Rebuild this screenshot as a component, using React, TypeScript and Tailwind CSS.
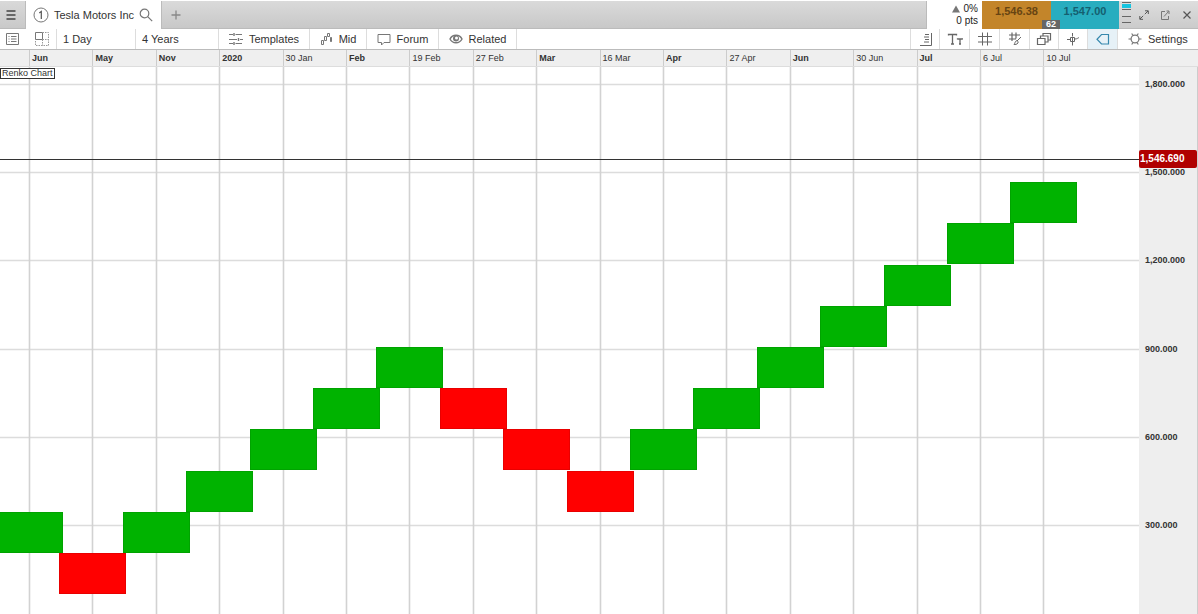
import React from "react";

const months: [string, boolean][] = [
  ["Jun", true], ["May", true], ["Nov", true], ["2020", true], ["30 Jan", false], ["Feb", true],
  ["19 Feb", false], ["27 Feb", false], ["Mar", true], ["16 Mar", false], ["Apr", true],
  ["27 Apr", false], ["Jun", true], ["30 Jun", false], ["Jul", true], ["6 Jul", false], ["10 Jul", false],
];
const prices = ["1,800.000", "1,500.000", "1,200.000", "900.000", "600.000", "300.000"];

// Renko bricks: level counted in brick heights from the lowest one
const levels = [1, 0, 1, 2, 3, 4, 5, 4, 3, 2, 3, 4, 5, 6, 7, 8, 9];
const W = 1139;
const H = 547;
const columnX = (i: number) => Math.round(29 + i * 63.4);
const gridY = (i: number) => Math.round(17 + i * 88.2);
const LAST_Y = 92;

function Icon({ children, w = 16, h = 16 }: { children: React.ReactNode; w?: number; h?: number }) {
  return (
    <svg width={w} height={h} viewBox={`0 0 ${w} ${h}`} fill="none" stroke="currentColor" strokeWidth="1" className="shrink-0" aria-hidden="true">
      {children}
    </svg>
  );
}

function TopBar() {
  return (
    <header className="flex h-7 shrink-0 text-[11px] text-[#333]">
      <button aria-label="Menu" className="flex w-[26px] items-center justify-center border-r border-b border-[#bbb] bg-linear-to-b from-[#d9d9d9] to-[#c9c9c9] pr-1 text-[#444]">
        <Icon w={12} h={12}><path d="M1.500 2h9M1.500 6h9M1.500 10h9" strokeWidth="1.7" /></Icon>
      </button>
      <button className="flex w-[135px] items-center gap-[5px] bg-white pl-[7px] whitespace-nowrap">
        <Icon><circle cx="8" cy="8" r="7" stroke="#777" /><path d="M6.3 6l2-1.600V12" stroke="#555" strokeWidth="1.200" /></Icon>
        <span>Tesla Motors Inc</span>
        <span className="text-[#777]"><Icon w={14} h={14}><circle cx="5.500" cy="5.500" r="4.300" strokeWidth="1.200" /><path d="M8.700 8.700l4.500 4.500" strokeWidth="1.200" /></Icon></span>
      </button>
      <div className="flex min-w-0 flex-1 items-center border-x border-b border-[#bbb] bg-linear-to-b from-[#dadada] to-[#c8c8c8] pl-2">
        <button aria-label="Add tab" className="text-[#888]"><Icon w={12} h={12}><path d="M6 1.500v9M1.500 6h9" strokeWidth="1.3" /></Icon></button>
      </div>
      <div className="w-[55px] pt-[2px] pr-1 text-right text-[10px] leading-3 text-[#222]">
        <div className="flex items-center justify-end gap-1">
          <Icon w={8} h={8}><path d="M4 0.500L8 7.500H0Z" fill="#777" stroke="none" /></Icon>0%
        </div>
        <div>0 pts</div>
      </div>
      <div className="relative flex w-[137px] text-[11px] leading-5 font-bold">
        <button className="flex w-[69px] items-start justify-center bg-[#c3852a] text-[#674412]">1,546.38</button>
        <button className="flex w-[68px] items-start justify-center bg-[#28adbf] text-[#155f70]">1,547.00</button>
        <span className="absolute bottom-0 left-[60px] w-[18px] bg-[#666] text-center text-[9px] leading-[9px] text-white">62</span>
      </div>
      <div className="flex w-[79px] items-center border-b border-[#bbb] bg-linear-to-b from-[#dedede] to-[#cbcbcb] text-[#555]">
        <Icon w={14} h={28}>
          <path d="M3 3h9v4h-9z" fill="#17c4e0" stroke="none" />
          <path d="M3 1.500h9M3 8.500h9M3 15.500h9M3 21.500h9" stroke="#666" />
        </Icon>
        <div className="flex flex-1 items-center justify-around">
          <button aria-label="Expand"><Icon w={10} h={10}><path d="M5.800 4.200L9 1M6 .8h3.300V4M4.200 5.800L1 9M.8 6v3.300H4" /></Icon></button>
          <button aria-label="Open in window"><Icon w={10} h={10}><path d="M5 1.500H1.500v8h7V6M4 6.500l4.500-5M6.500 1h2.500v3" stroke="#777" /></Icon></button>
          <button aria-label="Close"><Icon w={10} h={10}><path d="M1.500 1.500l7 7M8.500 1.500l-7 7" strokeWidth="1.200" /></Icon></button>
        </div>
      </div>
    </header>
  );
}

const tool = "flex items-center justify-center gap-[6px] border-r border-[#ddd] whitespace-nowrap";

function Toolbar() {
  return (
    <nav className="flex h-[21px] shrink-0 border-b border-[#bbb] bg-white text-[11px] text-[#333]">
      <button aria-label="List" className="flex w-7 items-center pl-1 text-[#777]">
        <Icon><path d="M2.500 2.500h12v11h-12zM7 5.500h5.500M7 8h5.500M7 10.500h5.500M4.500 5.500h1M4.500 8h1M4.500 10.500h1" /></Icon>
      </button>
      <button aria-label="Layout" className={`${tool} w-[29px] text-[#777]`}>
        <Icon><path d="M1.500 1.500h7v7h-7z" /><path d="M8.500 1.500h6v13h-13v-6M8.500 8.500h6M8.500 8.500v6" stroke="#999" strokeDasharray="1.500 1" /></Icon>
      </button>
      <button className="flex w-[79px] items-center border-r border-[#ddd] pl-[6px]">1 Day</button>
      <button className="flex w-[83px] items-center border-r border-[#ddd] pl-[6px]">4 Years</button>
      <button className={`${tool} w-[91px]`}>
        <Icon w={14}><g stroke="#777"><path d="M0 3.500h4M6.500 3.500H13M0 8.500h8M11 8.500h3M0 12.500h4M6.500 12.500H13" /><path d="M5 2v3M9.500 7v3M5 11v3" strokeWidth="1.400" /></g></Icon>Templates
      </button>
      <button className={`${tool} w-[57px]`}>
        <Icon w={13}><g stroke="#777"><path d="M1.500 9.500h2v4h-2zM4.500 5.500h2v4h-2zM7.500 2.500h2v3h-2z" /><path d="M10.500 6.500h1v4h-1z" fill="#777" /></g></Icon>Mid
      </button>
      <button className={`${tool} w-[72px]`}>
        <Icon w={14}><path d="M1 3.500h12v8H7l-2.500 2.500v-2.500H1z" stroke="#777" /></Icon>Forum
      </button>
      <button className={`${tool} w-[78px]`}>
        <Icon w={14}><path d="M1 8c2.500-5 9.500-5 12 0c-2.500 5-9.500 5-12 0z" stroke="#777" strokeWidth="1.400" /><circle cx="7" cy="7.500" r="3" fill="#777" stroke="none" /><circle cx="7.500" cy="7" r="1.500" fill="#fff" stroke="none" /></Icon>Related
      </button>
      <div className="flex-1 border-r border-[#ddd]" />
      <div className="flex text-[#666]">
        <button aria-label="Price scale" className={`${tool} w-[29px]`}><Icon><path d="M14.500 2v12.500H3M8 3.500h4M7 6h5M8 8.500h4M7 11h5" /></Icon></button>
        <button aria-label="Text size" className={`${tool} w-[30px]`}><Icon><path d="M1.500 4.500V3.500h8v1M5.500 3.500v10M4 13h3M10.500 8.500V8h5v.5M13 8v5M12 13h2" strokeWidth="1.300" /></Icon></button>
        <button aria-label="Grid" className={`${tool} w-[30px]`}><Icon><path d="M5.500 1.500v13M10.500 1.500v13M1 5.500h14M1 11h14" /></Icon></button>
        <button aria-label="Draw" className={`${tool} w-[30px]`}><Icon><path d="M5 1.500v8.500M9 1.500v6M2 4h11M2 8h7" strokeWidth="1.200" /><path d="M14 6l-4 4M10 9.500a2 2 0 0 1 1 2.500c-1 1.500-3 1.500-4 1.500 1-1 1-3.500 3-4z" /></Icon></button>
        <button aria-label="Layers" className={`${tool} w-[29px]`}><Icon><path d="M1.500 7.500h7.500v6H1.500zM4.500 7V5h7.500v6H9.500M7 4.500v-2h7.500v6.500h-2" strokeWidth="1.200" /></Icon></button>
        <button aria-label="Crosshair" className={`${tool} w-[29px]`}><Icon w={14}><path d="M6.500 2v3.500M6.500 10.500v4M1 8.500h3M9 8c2 0 3-1 4-1.500M4.500 6.500h4v4h-4zM6.500 6.500v4" /></Icon></button>
        <button aria-label="Price label" className={`${tool} w-[30px] bg-[#e6f1f7] text-[#3588ad]`}><Icon w={14}><path d="M5.500 3.500h7v9.500h-7L1 8.250z" strokeWidth="1.200" /></Icon></button>
      </div>
      <button className="flex w-[80px] items-center gap-[6px] pl-[10px] whitespace-nowrap">
        <Icon w={14}><g stroke="#777" strokeWidth="1.200"><circle cx="7" cy="8" r="3.900" /><path d="M11 8h2.500M.5 8H3M5 4.500L3.700 2.500M9 4.500l1.300-2M5 11.500l-1.300 2M9 11.500l1.300 2" /></g></Icon>Settings
      </button>
    </nav>
  );
}

function RenkoChart() {
  return (
    <svg viewBox={`0 0 ${W} ${H}`} preserveAspectRatio="none" className="absolute inset-0 h-full w-full" role="img" aria-label="Renko Chart">
      {prices.map((p, i) => (
        <path key={p} d={`M0 ${gridY(i) + 0.5}H${W}`} stroke="#dcdcdc" strokeWidth="1.3" />
      ))}
      {levels.map((_, i) => (
        <path key={i} d={`M${columnX(i) + 0.5} 0V${H}`} stroke="#d2d2d2" strokeWidth="1.6" />
      ))}
      <path d={`M0 ${LAST_Y + 0.5}H${W}`} stroke="#333" />
      {levels.map((level, i) => {
        const falling = i > 0 && level < levels[i - 1];
        return (
          <rect
            key={i}
            x={Math.round(-4 + i * 63.4) + 0.5}
            y={Math.round(486 - level * 41.2) + 0.5}
            width={66}
            height={40}
            fill={falling ? "#ff0000" : "#00b300"}
            stroke={falling ? "#e80000" : "#00a300"}
          />
        );
      })}
    </svg>
  );
}

export default function App() {
  return (
    <div className="flex h-screen flex-col overflow-hidden bg-white pt-px font-['Liberation_Sans',Arial,sans-serif] text-[#333]">
      <TopBar />
      <Toolbar />
      <div className="grid h-[17px] shrink-0 grid-cols-[minmax(0,290fr)_repeat(16,minmax(0,634fr))_minmax(0,1546fr)] border-b border-[#ddd] bg-[#efefef] text-[9px] leading-4">
        <div />
        {months.map(([label, bold], i) => (
          <div key={i} className={`border-l border-[#ccc] pl-[2px] whitespace-nowrap ${bold ? "font-bold" : ""}`}>{label}</div>
        ))}
      </div>
      <main className="flex min-h-0 flex-1">
        <div className="relative min-w-0 flex-1">
          <RenkoChart />
          <span className="absolute top-px left-0 border border-[#333] bg-white px-px text-[9px] leading-[9px]">Renko Chart</span>
        </div>
        <aside className="relative w-[59px] border-r border-[#ccc] bg-[#eee]">
          <div className="grid h-full grid-rows-[minmax(0,110fr)_repeat(5,minmax(0,882fr))_minmax(0,950fr)] pl-[6px] text-[9px] leading-3 font-bold">
            <div />
            {prices.map((p) => <div key={p}>{p}</div>)}
          </div>
          <div
            className="absolute left-0 w-[58px] -translate-y-1/2 rounded-xs bg-[#b00000] pl-px text-[10px] leading-[18px] font-bold text-white"
            style={{ top: `${(LAST_Y / H) * 100}%` }}
          >
            1,546.690
          </div>
        </aside>
      </main>
    </div>
  );
}
